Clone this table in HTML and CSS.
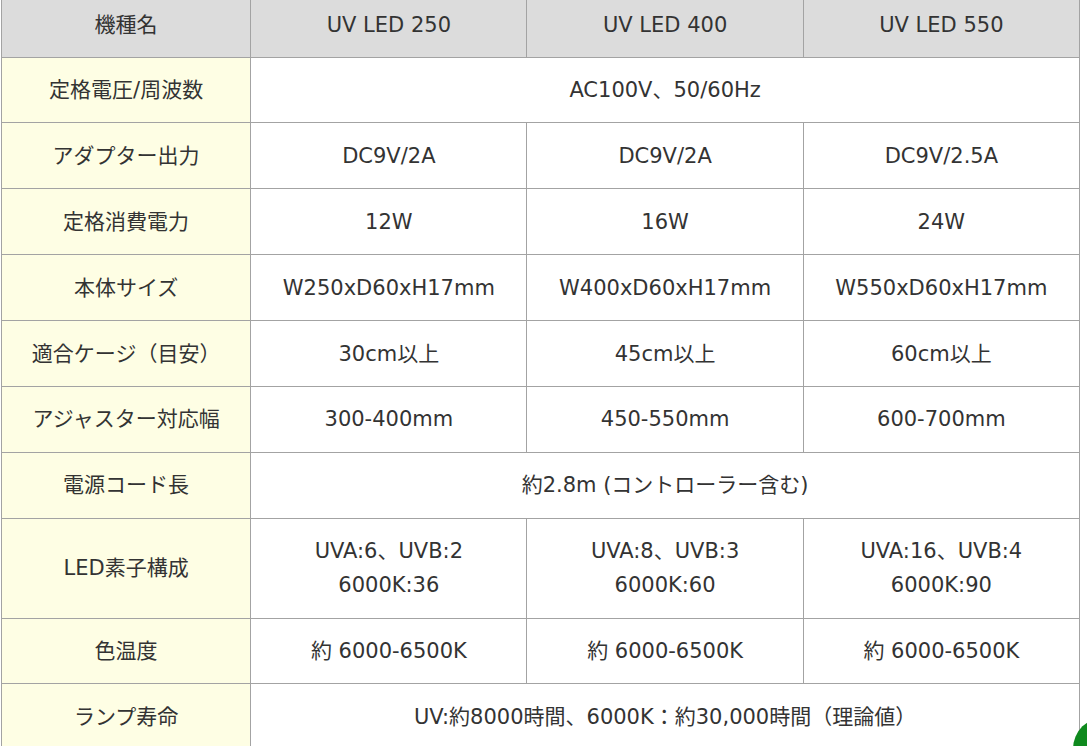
FILE: index.html
```html
<!DOCTYPE html>
<html lang="ja">
<head>
<meta charset="utf-8">
<title>UV LED 仕様</title>
<link rel="stylesheet" href="styles.css">
</head>
<body>
<div class="page">
<table class="spec">
  <colgroup>
    <col class="c-label"><col class="c-val"><col class="c-val"><col class="c-val">
  </colgroup>
  <thead>
    <tr><th>機種名</th><th>UV LED 250</th><th>UV LED 400</th><th>UV LED 550</th></tr>
  </thead>
  <tbody>
    <tr><th>定格電圧/周波数</th><td colspan="3">AC100V、50/60Hz</td></tr>
    <tr><th>アダプター出力</th><td>DC9V/2A</td><td>DC9V/2A</td><td>DC9V/2.5A</td></tr>
    <tr><th>定格消費電力</th><td>12W</td><td>16W</td><td>24W</td></tr>
    <tr><th>本体サイズ</th><td>W250xD60xH17mm</td><td>W400xD60xH17mm</td><td>W550xD60xH17mm</td></tr>
    <tr><th>適合ケージ（目安）</th><td>30cm以上</td><td>45cm以上</td><td>60cm以上</td></tr>
    <tr><th>アジャスター対応幅</th><td>300-400mm</td><td>450-550mm</td><td>600-700mm</td></tr>
    <tr><th>電源コード長</th><td colspan="3">約2.8m (コントローラー含む)</td></tr>
    <tr><th>LED素子構成</th><td>UVA:6、UVB:2<br>6000K:36</td><td>UVA:8、UVB:3<br>6000K:60</td><td>UVA:16、UVB:4<br>6000K:90</td></tr>
    <tr><th>色温度</th><td>約 6000-6500K</td><td>約 6000-6500K</td><td>約 6000-6500K</td></tr>
    <tr><th>ランプ寿命</th><td colspan="3">UV:約8000時間、6000K：約30,000時間（理論値）</td></tr>
  </tbody>
</table>
</div>
<a class="pagetop" href="#" aria-label="ページトップ"></a>
</body>
</html>
```
FILE: styles.css
```css
html, body {
  margin: 0;
  padding: 0;
  background: #ffffff;
  overflow: hidden;
}
.page {
  padding-left: 1px;
  margin-top: -9px;
}
.spec {
  border-collapse: collapse;
  table-layout: fixed;
  width: 1079px;
  font-family: "DejaVu Sans", "Noto Sans CJK JP", sans-serif;
  font-size: 21px;
  line-height: 34px;
  color: #333333;
}
.c-label { width: 249px; }
.c-val { width: 276px; }
.spec th, .spec td {
  border: 1px solid #a3a3a3;
  padding: 15.45px 4px;
  text-align: center;
  vertical-align: middle;
  font-weight: normal;
}
.spec thead th {
  background: #dcdcdc;
  padding-top: 16.3px;
  padding-bottom: 14.3px;
}
.spec tbody th {
  background: #fefee4;
}
.spec td {
  background: #ffffff;
}
.pagetop {
  position: fixed;
  left: 1073px;
  top: 717px;
  width: 64px;
  height: 64px;
  border-radius: 50%;
  background: #0f8a1e;
}
```
